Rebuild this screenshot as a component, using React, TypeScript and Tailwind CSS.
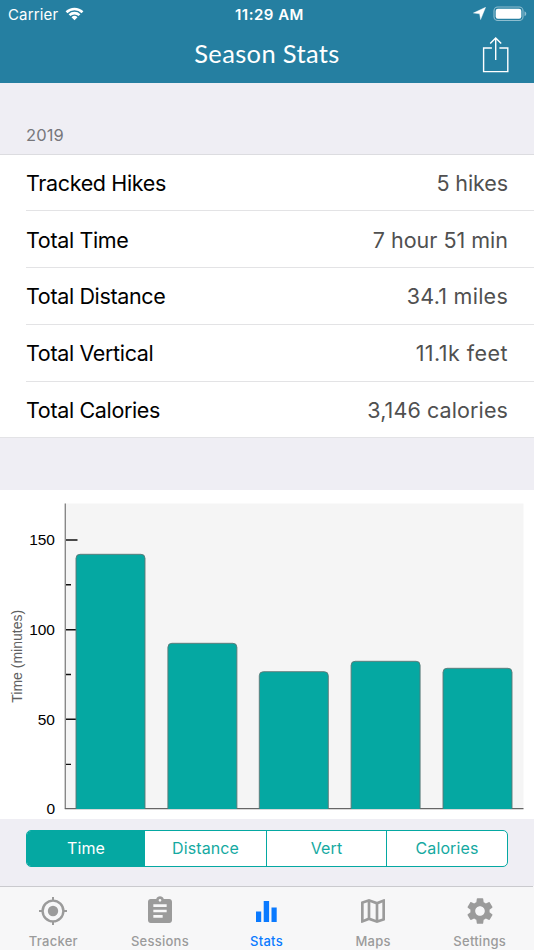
import { MdAssignment, MdOutlineMap, MdSettings } from "react-icons/md";

const rows = [
  { label: "Tracked Hikes", value: "5 hikes", height: "h-[56px] pt-[2px]", tracking: "tracking-[-0.1px]" },
  { label: "Total Time", value: "7 hour 51 min", height: "h-[57px] pt-[2px]", tracking: "tracking-[0px]" },
  { label: "Total Distance", value: "34.1 miles", height: "h-[57px] pt-px", tracking: "tracking-[0.25px]" },
  { label: "Total Vertical", value: "11.1k feet", height: "h-[57px] pt-px", tracking: "tracking-[0.45px]" },
  { label: "Total Calories", value: "3,146 calories", height: "h-[55px] pt-[2px]", tracking: "tracking-[0.1px]" },
];

const bars = [
  { x: 76, top: 554.3 },
  { x: 167.9, top: 643.3 },
  { x: 259.3, top: 671.7 },
  { x: 351.1, top: 661.3 },
  { x: 443, top: 668.3 },
];

const segments = [
  { label: "Time", style: "w-[118px] bg-[#05a8a2] text-white" },
  { label: "Distance", style: "w-[122px] border-r" },
  { label: "Vert", style: "w-[120px] border-r" },
  { label: "Calories", style: "w-[120px]" },
];

function Header() {
  return (
    <header className="h-[83px] bg-[#257fa1] text-white">
      <div className="grid h-7 grid-cols-3 items-center pl-2 pr-2">
        <div className="flex items-center gap-[7px]">
          <span className="text-[15px] leading-none tracking-[0.15px]">Carrier</span>
          <svg width="19" height="14" viewBox="0 0 19 14" fill="currentColor" className="-mt-px">
            <path d="M.6 4.3a12.8 12.8 0 0 1 17.8 0l-1.8 1.9a10.2 10.2 0 0 0-14.2 0z" />
            <path d="M3.6 7.2a8.5 8.5 0 0 1 11.8 0l-1.8 1.9a6 6 0 0 0-8.2 0z" />
            <path d="M6.5 10.2a4.5 4.5 0 0 1 6 0l-3 3.1z" />
          </svg>
        </div>
        <span className="whitespace-nowrap pl-[5px] text-center text-[15px] font-semibold leading-none tracking-[0.5px]">11:29 AM</span>
        <div className="-mt-[1px] flex items-center justify-end gap-[7px]">
          <svg width="13" height="13" viewBox="0 0 13 13" fill="currentColor">
            <path d="M12.6.3 7.6 12.6 6.6 6.8.4 6z" stroke="currentColor" strokeWidth=".4" strokeLinejoin="round" />
          </svg>
          <svg width="34" height="16" viewBox="0 0 34 16" className="-mr-[1px]">
            <rect x="1" y="1" width="29" height="13.5" rx="3.8" fill="none" stroke="#8ebed0" strokeWidth="1.1" />
            <rect x="2.7" y="2.7" width="25.6" height="10" rx="2.2" fill="white" />
            <path d="M31.5 5.3q1.8.8 1.8 2.5t-1.8 2.5z" fill="#8ebed0" />
          </svg>
        </div>
      </div>
      <div className="grid h-[55px] grid-cols-[1fr_auto_1fr] items-center">
        <span />
        <h1 className="-mt-[3px] font-['Lato'] text-[25.5px] leading-none tracking-[0.35px]">Season Stats</h1>
        <svg width="28" height="38" viewBox="0 0 28 38" className="-mt-[2px] mr-[25px] justify-self-end" fill="none" stroke="currentColor" strokeWidth="1.4">
          <path d="M10.9 12H2.6v23.6h24.2V12H18.4M14.7 24V2M9.2 7.6l5.5-5.6 5.5 5.6" />
        </svg>
      </div>
    </header>
  );
}

function StatsList() {
  return (
    <section>
      <h2 className="flex h-[72px] items-end border-b border-[#dcdce0] pb-[10px] pl-[26px] text-[16.5px] leading-[18px] tracking-[0.1px] text-[#77777b]">2019</h2>
      <dl className="border-b border-[#e3e3e6] bg-white pl-[26px]">
        {rows.map((row, i) => (
          <div key={row.label} className={`flex items-center justify-between pr-[26px] text-[21.5px] ${row.height} ${i < 4 ? "border-b border-[#e3e3e5]" : ""}`}>
            <dt className="tracking-[-0.35px] text-black">{row.label}</dt>
            <dd className={`text-[#505050] ${row.tracking}`}>{row.value}</dd>
          </div>
        ))}
      </dl>
    </section>
  );
}

function Chart() {
  return (
    <svg className="block bg-white" width="534" height="329" viewBox="0 490 534 329">
      <rect x="65" y="503.5" width="458.5" height="305.5" fill="#f5f5f5" />
      <g stroke="#111" strokeWidth="1.4">
        <path d="M65 540h12.5M65 629.8h12.5M65 719.2h12.5M65 584.7h6M65 674.5h6M65 764.4h6" />
      </g>
      <path d="M65.3 503.5v305.2" stroke="#888" strokeWidth="1.4" />
      <path d="M64.8 808.6h458.7" stroke="#666" strokeWidth="1.1" />
      {bars.map(({ x, top }) => (
        <g key={x}>
          <path d={`M${x} 809V${top + 4}q0-4 4-4h61q4 0 4 4V809z`} fill="#05a8a2" />
          <path d={`M${x} 808.5V${top + 4}q0-4 4-4h61q4 0 4 4V808.5`} fill="none" stroke="#5d7775" strokeWidth=".9" />
        </g>
      ))}
      <g className="font-['Liberation_Sans',sans-serif] text-[15.5px]" textAnchor="end" fill="#000">
        <text x="55" y="545.2">150</text>
        <text x="55" y="635">100</text>
        <text x="55" y="724.7">50</text>
        <text x="55" y="814.4">0</text>
      </g>
      <text transform="translate(22 656.3) rotate(-90)" textAnchor="middle" fill="#606060" className="font-['Liberation_Sans',sans-serif] text-[14px]">Time (minutes)</text>
    </svg>
  );
}

function TrackerIcon() {
  return (
    <svg width="28" height="28" viewBox="0 0 28 28" fill="none" stroke="currentColor">
      <circle cx="14" cy="14" r="10.4" strokeWidth="2.4" />
      <circle cx="14" cy="14" r="5.2" fill="currentColor" stroke="none" />
      <path d="M14 0v4M14 24v4M0 14h4M24 14h4" strokeWidth="2" />
    </svg>
  );
}

function StatsIcon() {
  return (
    <svg width="24" height="24" viewBox="0 0 24 24" fill="currentColor">
      <path d="M2 12.5h5.2V23H2zM9.7 2h5.4v21H9.7zM17.5 8.5h5.2V23h-5.2z" />
    </svg>
  );
}

const tabs = [
  { label: "Tracker", icon: <TrackerIcon /> },
  { label: "Sessions", icon: <MdAssignment size={32} /> },
  { label: "Stats", icon: <StatsIcon />, active: true },
  { label: "Maps", icon: <MdOutlineMap size={32} /> },
  { label: "Settings", icon: <MdSettings size={32} /> },
];

export default function App() {
  return (
    <div className="flex h-[950px] w-[534px] flex-col overflow-hidden bg-[#efeef4] font-['Inter',sans-serif]">
      <Header />
      <StatsList />
      <main className="mt-[52px]">
        <Chart />
        <div className="mx-[26px] mt-[11px] flex h-[37px] overflow-hidden rounded-[5px] border border-[#05a8a2] bg-white text-[16px] tracking-[0.1px] text-[#14a9a1]">
          {segments.map(({ label, style }) => (
            <button key={label} className={`grow border-[#05a8a2] pb-[2px] ${style}`}>{label}</button>
          ))}
        </div>
      </main>
      <nav className="mt-auto grid h-[64px] w-[533px] grid-cols-5 border-t border-[#cacace] bg-[#f7f7f8] shadow-[1px_0_#f7f7f8]">
        {tabs.map(({ label, icon, active }) => (
          <div key={label} className={`flex flex-col items-center ${active ? "text-[#0a7aff]" : "text-[#9b9b9b]"}`}>
            <div className="mt-[8px] flex h-8 items-center">{icon}</div>
            <span className="mt-[6px] text-[13px] font-medium leading-[16px] tracking-[0.25px]">{label}</span>
          </div>
        ))}
      </nav>
    </div>
  );
}
